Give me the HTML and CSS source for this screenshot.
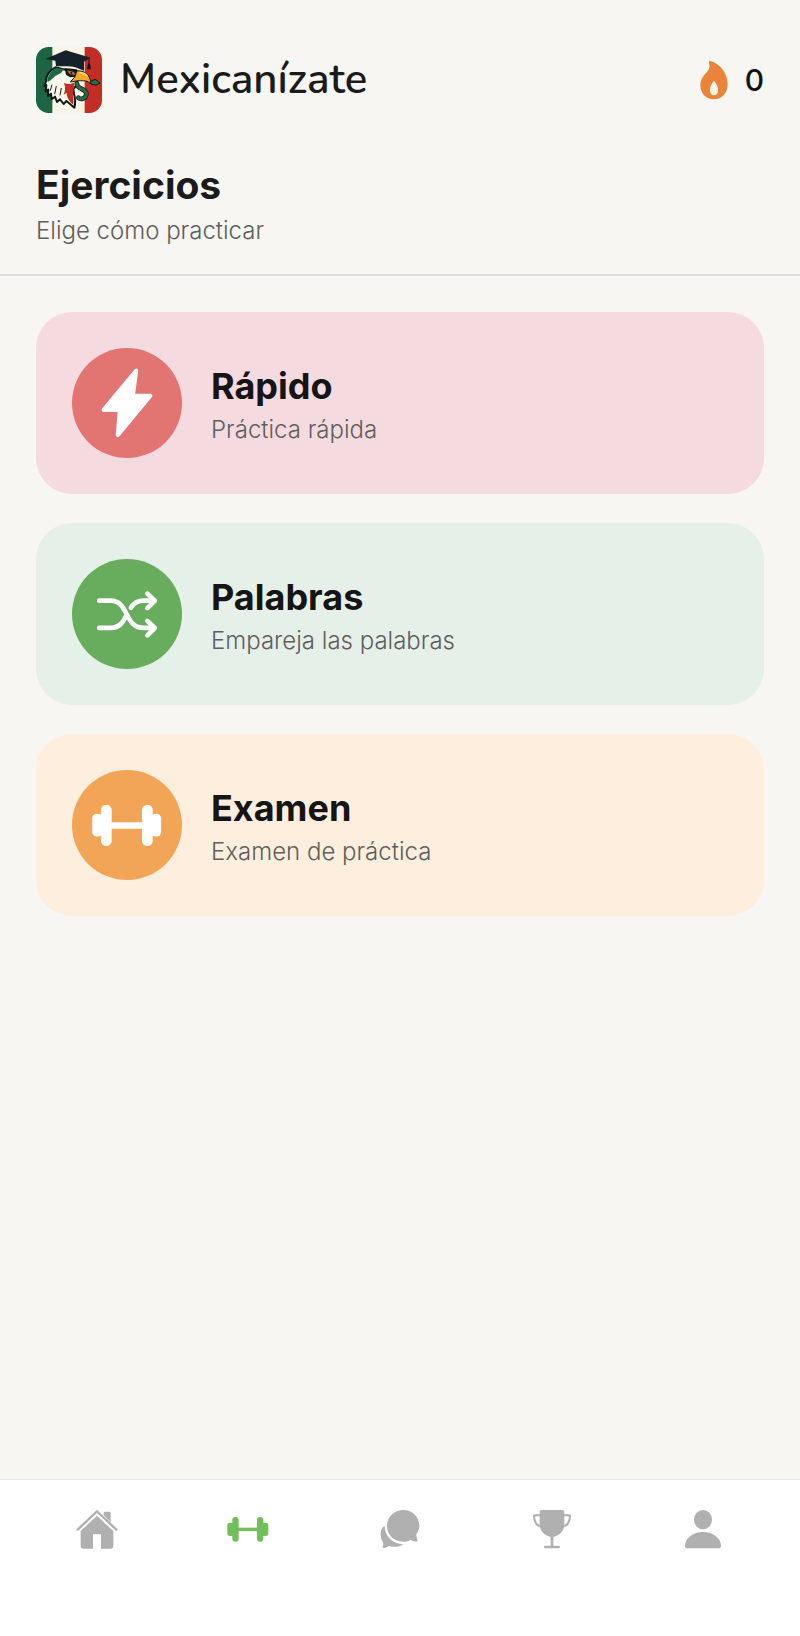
FILE: index.html
```html
<!DOCTYPE html>
<html lang="es">
<head>
<meta charset="utf-8">
<meta name="viewport" content="width=device-width, initial-scale=1">
<title>Mexicanízate</title>
<link rel="stylesheet" href="styles.css">
</head>
<body>
<header class="top">
  <div class="brand-row">
    <div class="brand">
      <svg class="logo" viewBox="18 19 198 198" aria-hidden="true">
        <clipPath id="tile"><rect x="18" y="19" width="198" height="198" rx="38"/></clipPath>
        <g clip-path="url(#tile)">
          <path fill="#f8f4e6" d="M18 19h198v198H18z"/>
          <path fill="#1c6540" d="M18 19h49v198H18z"/>
          <path fill="#c22d25" d="M164 19h52v198h-52z"/>
          <path fill="#f9f6ec" stroke="#101a1c" stroke-width="6" stroke-linejoin="round" d="M76 80C58 90 48 106 48 122l-5 14 6-3-2 20 8-6-1 19 9-7 2 17 10-8 6 16 9-8 11 14 8-9 12 10 12 10c4-14 3-28-1-42l-2-14 12-14-2-22-20-18z"/>
          <path fill="#1f6943" d="M76 82l26 2-8 12-18 10-16 14-8 4c0-16 9-32 24-42z"/>
          <path fill="#c22d25" d="M134 124c-10 8-22 8-32 2 5 14 4 24-1 36l9-6c0 14 8 26 20 36 2-16-2-24 0-40z"/>
          <path fill="none" stroke="#101a1c" stroke-width="3" d="M66 132l-5 18M79 136l-5 24M94 142l-4 22"/>
          <path fill="#101a1c" d="M104 82l36 4 8 8-10 14-18 2-12-8z"/>
          <path fill="#c46d2d" d="M111 89l21 5 3 9-16-2z"/>
          <circle cx="124" cy="97" r="3" fill="#101a1c"/>
          <path fill="#efac2d" stroke="#101a1c" stroke-width="3" d="M140 91c21-4 44 13 42 39-9-12-21-9-36-10l-25 4 14-16z"/>
          <path fill="none" stroke="#f7d36a" stroke-width="5" d="M147 97c11-1 19 3 25 9"/>
          <path fill="none" stroke="#101a1c" stroke-width="14" stroke-linecap="round" d="M141 128c-1 20 29 14 28 32-1 14-16 18-24 11"/>
          <path fill="none" stroke="#286b48" stroke-width="10" stroke-linecap="round" d="M141 128c-1 20 29 14 28 32-1 14-16 18-24 11"/>
          <path fill="#286b48" stroke="#101a1c" stroke-width="3" d="M180 123l15-7 10 6 5 6-12 5-14-2z"/>
          <path fill="#17212a" d="M46 55l61-26 75 22-20 12 0 27-26-10c-22-6-43-1-58-4l-2-16z"/>
          <path fill="none" stroke="#101a1c" stroke-width="3" d="M177 52v18"/>
          <path fill="#101a1c" d="M174 68h6l3 18h-12z"/>
        </g>
      </svg>
      <span class="brand-name">Mexicanízate</span>
    </div>
    <div class="streak" aria-label="Racha: 0">
      <svg class="flame" viewBox="57 56 90 126" aria-hidden="true">
        <path fill="#e98439" fill-rule="evenodd" d="M90 62c29 6 53 36 53 70 0 26-17 45-41 45s-41-18-41-42c0-15 6-25 16-36 10-10 14-18 10-32q-1-5 3-5zM102 121c-6 7-12 17-12 27 0 11 5 17 12 17s12-6 12-17c0-10-6-20-12-27z"/>
      </svg>
      <span class="streak-count">0</span>
    </div>
  </div>
  <h1 class="title">Ejercicios</h1>
  <p class="subtitle">Elige cómo practicar</p>
</header>

<main class="cards">
  <button class="card card-red" type="button">
    <svg class="badge" viewBox="128 146 327 327" aria-hidden="true">
      <path fill="#fff" stroke="#fff" stroke-width="12" stroke-linejoin="round" d="M319 213L222 330h48l-6 75L361 288h-52z"/>
    </svg>
    <span class="card-text"><span class="card-title">Rápido</span><span class="card-note">Práctica rápida</span></span>
  </button>
  <button class="card card-green" type="button">
    <svg class="badge" viewBox="39 28 327 327" aria-hidden="true">
      <g fill="none" stroke="#fff" stroke-width="14" stroke-linecap="round" stroke-linejoin="round">
        <path d="M120 152h34c28 0 37 20 48 41 11 22 22 40 50 40h33M120 233h34c28 0 38-20 48-40M214 173c8-13 20-21 38-21h33M263 131l22 21-22 22M263 212l22 21-22 22"/>
      </g>
    </svg>
    <span class="card-text"><span class="card-title">Palabras</span><span class="card-note">Empareja las palabras</span></span>
  </button>
  <button class="card card-orange" type="button">
    <svg class="badge" viewBox="39 31 327 327" aria-hidden="true">
      <g fill="#fff">
        <path d="M150 186h104v20H150z"/>
        <rect x="99" y="161" width="30" height="68" rx="14"/><rect x="125" y="134" width="32" height="123" rx="16"/>
        <rect x="274" y="161" width="30" height="68" rx="14"/><rect x="247" y="134" width="32" height="123" rx="16"/>
        <path d="M115 163h20v62h-20zM268 163h20v62h-20z"/>
      </g>
    </svg>
    <span class="card-text"><span class="card-title">Examen</span><span class="card-note">Examen de práctica</span></span>
  </button>
</main>

<nav class="tabs" aria-label="Principal">
  <a class="tab" href="#inicio" aria-label="Inicio">
    <svg class="tab-icon" viewBox="39 105 144 144" aria-hidden="true">
      <path fill="none" stroke="currentColor" stroke-width="7" stroke-linecap="round" stroke-linejoin="round" d="M53 179l58-55 58 55"/>
      <path fill="currentColor" d="M131 136v-7q0-4 4-4h13q4 0 4 4v28zM111 137l49 46v44q0 9-9 9h-28v-43H99v43H71q-9 0-9-9v-44z"/>
    </svg>
  </a>
  <a class="tab tab-active" href="#ejercicios" aria-label="Ejercicios" aria-current="page">
    <svg class="tab-icon" viewBox="494 105 144 144" aria-hidden="true">
      <g fill="currentColor">
        <rect x="504" y="158" width="24" height="40" rx="8"/><rect x="519" y="141" width="19" height="74" rx="9"/>
        <rect x="603" y="158" width="24" height="40" rx="8"/><rect x="593" y="141" width="19" height="74" rx="9"/>
        <path d="M534 173h64v10h-64z"/>
      </g>
    </svg>
  </a>
  <a class="tab" href="#chat" aria-label="Chat">
    <svg class="tab-icon" viewBox="46 45 144 144" aria-hidden="true">
      <path fill="currentColor" d="M72 108c-8 3-12 14-12 25 0 13 5 20 8 25 1 5-1 9-3 14 7 4 15 0 20-5 10 5 31 6 43-5-28 1-56-21-56-54z"/>
      <path fill="currentColor" d="M128 60c28 0 48 21 48 48 0 11-5 19-9 25-1 6 3 11 4 20-6 4-15 1-21-4-7 4-14 6-22 6-28 0-49-20-49-47s21-48 49-48z"/>
    </svg>
  </a>
  <a class="tab" href="#logros" aria-label="Logros">
    <svg class="tab-icon" viewBox="51 45 144 144" aria-hidden="true">
      <path fill="currentColor" d="M92 60h62q6 0 6 6v37c0 19-14 34-33 38v26h16q4 0 4 4t-4 4h-40q-4 0-4-4t4-4h16v-26c-19-4-33-19-33-38V66q0-6 6-6z"/>
      <path fill="none" stroke="currentColor" stroke-width="6" stroke-linejoin="round" d="M87 76H69c0 16 7 30 20 34M159 76h18c0 16-7 30-20 34"/>
    </svg>
  </a>
  <a class="tab" href="#perfil" aria-label="Perfil">
    <svg class="tab-icon" viewBox="504 45 144 144" aria-hidden="true">
      <ellipse cx="576" cy="89" rx="27" ry="29" fill="currentColor"/>
      <path fill="currentColor" d="M531 175q-9 0-9-7c0-23 24-42 54-42s54 19 54 42q0 7-9 7z"/>
    </svg>
  </a>
</nav>
</body>
</html>
```
FILE: styles.css
```css
* {
  box-sizing: border-box;
}

body {
  margin: 0;
  min-height: 100vh;
  display: flex;
  flex-direction: column;
  background: #f7f6f2;
  color: #1b1b1b;
  font-family: Inter, "Liberation Sans", sans-serif;
}

.top {
  padding: 47px 36px 29px;
  border-bottom: 2px solid #e0e0de;
}

.brand-row,
.brand,
.streak {
  display: flex;
  align-items: center;
}

.brand-row {
  justify-content: space-between;
}

.brand {
  gap: 18px;
}

.logo {
  width: 66px;
  height: 66px;
}

.brand-name {
  font-family: Nunito, "Open Sans", sans-serif;
  font-size: 42px;
  font-weight: 600;
  line-height: 56px;
}

.streak {
  gap: 16px;
}

.flame {
  width: 30px;
  height: 42px;
}

.streak-count {
  color: #111;
  font-size: 30px;
  font-weight: 500;
  line-height: 36px;
}

.title {
  margin: 48px 0 0;
  font-size: 39px;
  font-weight: 700;
  line-height: 48px;
}

.subtitle {
  margin: 8px 0 0;
  color: #5e5e5c;
  font-size: 24px;
  font-weight: 300;
  line-height: 28px;
}

.cards {
  flex: 1;
  display: flex;
  flex-direction: column;
  gap: 29px;
  padding: 36px;
}

.card {
  display: flex;
  align-items: center;
  gap: 29px;
  padding: 36px;
  border: 0;
  border-radius: 36px;
  color: #151515;
  font-family: inherit;
  text-align: left;
}

.card-red {
  background: #f5dadf;
}

.card-green {
  background: #e5f0e8;
}

.card-orange {
  background: #fdeedd;
}

.badge {
  flex: none;
  width: 110px;
  height: 110px;
  border-radius: 50%;
}

.card-red .badge {
  background: #e27472;
}

.card-green .badge {
  background: #68ad5d;
}

.card-orange .badge {
  background: #f2a557;
}

.card-text {
  display: flex;
  flex-direction: column;
  gap: 8px;
  padding-top: 2px;
}

.card-title {
  font-size: 36px;
  font-weight: 700;
  line-height: 44px;
}

.card-note {
  color: #5e5e5c;
  font-size: 24px;
  font-weight: 300;
  line-height: 28px;
}

.tabs {
  display: flex;
  padding: 25px 21px 83px;
  border-top: 1px solid #e6e6e4;
  background: #fff;
}

.tab {
  flex: 1;
  display: flex;
  justify-content: center;
  color: #b0b0b0;
}

.tab-active {
  color: #70bf59;
}

.tab-icon {
  width: 48px;
  height: 48px;
}
```
